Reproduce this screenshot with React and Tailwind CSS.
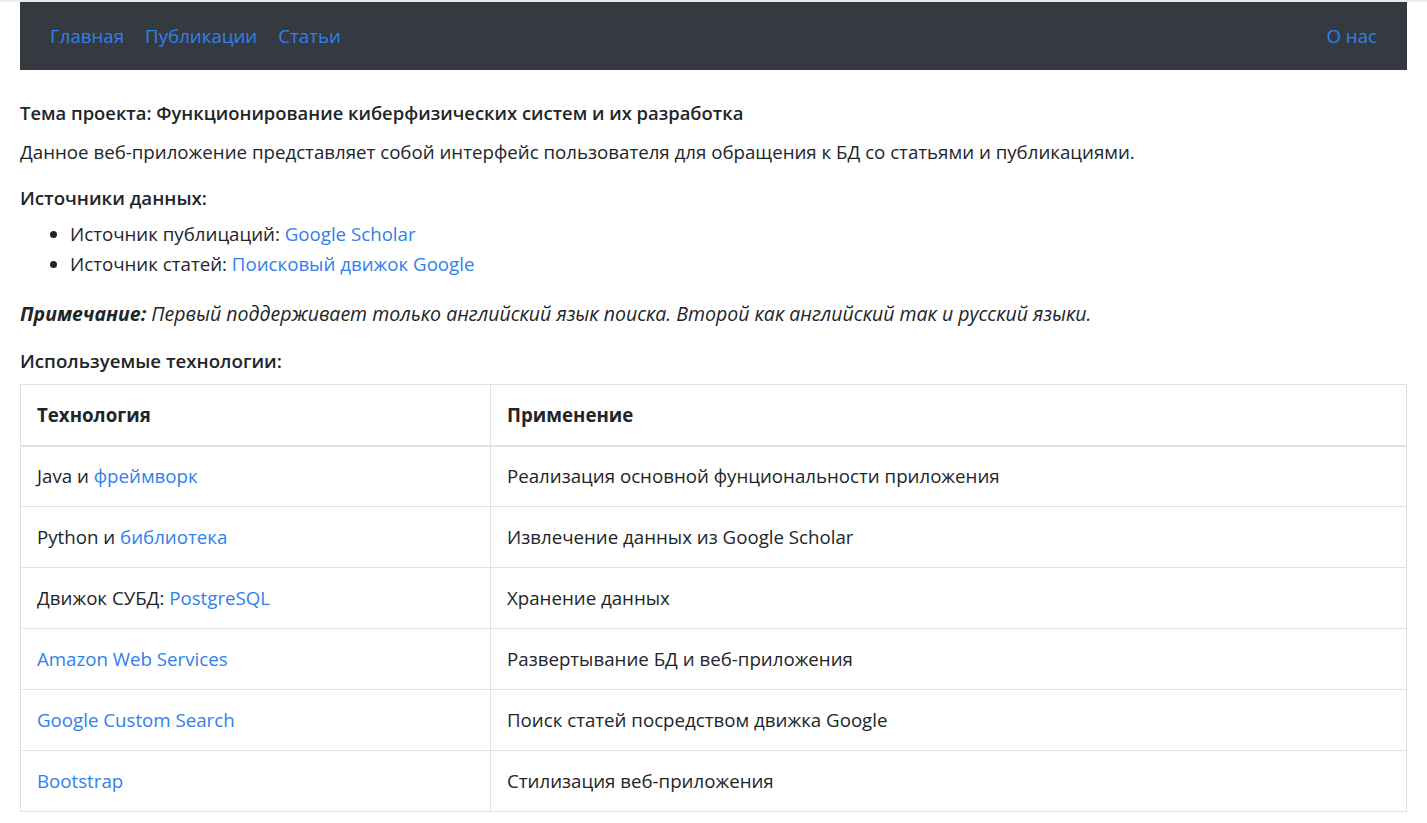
import React from 'react';

const rows = [
  { tech: <>Java и <A>фреймворк</A></>, use: 'Реализация основной фунциональности приложения' },
  { tech: <>Python и <A>библиотека</A></>, use: 'Извлечение данных из Google Scholar' },
  { tech: <>Движок СУБД: <A>PostgreSQL</A></>, use: 'Хранение данных' },
  { tech: <A>Amazon Web Services</A>, use: 'Развертывание БД и веб-приложения' },
  { tech: <A>Google Custom Search</A>, use: 'Поиск статей посредством движка Google' },
  { tech: <A>Bootstrap</A>, use: 'Стилизация веб-приложения' },
];

function A({ children }) {
  return (
    <a href="#" className="text-[#2f80ed]">
      {children}
    </a>
  );
}

export default function App() {
  return (
    <div
      className="min-h-[823px] bg-white text-[#212529] text-[18.7px] leading-[30px] border-t-2 border-[#e9ecef]"
      style={{ fontFamily: '"Open Sans", "Noto Sans", sans-serif' }}
    >
      <div className="px-5">
        {/* Navbar */}
        <nav className="h-[68px] bg-[#343a40] flex items-center justify-between px-[30px]">
          <div className="flex gap-[21px]">
            <a href="#" className="text-[#2f80ed]">Главная</a>
            <a href="#" className="text-[#2f80ed]">Публикации</a>
            <a href="#" className="text-[#2f80ed]">Статьи</a>
          </div>
          <a href="#" className="text-[#2f80ed]">О нас</a>
        </nav>

        <div className="pt-[29px]">
          <p className="font-semibold text-[18.4px] leading-[28px]">
            Тема проекта: Функционирование киберфизических систем и их разработка
          </p>
          <p className="mt-[10px]">
            Данное веб-приложение представляет собой интерфейс пользователя для обращения к БД со статьями и публикациями.
          </p>

          <p className="mt-[16px] font-semibold">Источники данных:</p>
          <ul className="mt-[6px] pl-[50px] list-disc">
            <li>Источник публицаций: <A>Google Scholar</A></li>
            <li>Источник статей: <A>Поисковый движок Google</A></li>
          </ul>

          <p className="mt-[20px] italic text-[19.5px]">
            <b className="font-bold">Примечание:</b> Первый поддерживает только английский язык поиска. Второй как английский так и русский языки.
          </p>

          <p className="mt-[17px] font-semibold">Используемые технологии:</p>

          <table className="mt-[8px] w-full border-collapse border border-[#dee2e6]">
            <thead>
              <tr className="border-b-2 border-[#dee2e6]">
                <th className="w-[470px] h-[61px] text-left font-bold px-4 border-r border-[#dee2e6]">Технология</th>
                <th className="text-left font-bold px-4">Применение</th>
              </tr>
            </thead>
            <tbody>
              {rows.map((r, i) => (
                <tr key={i} className="border-b border-[#dee2e6]">
                  <td className="h-[61px] px-4 border-r border-[#dee2e6]">{r.tech}</td>
                  <td className="px-4">{r.use}</td>
                </tr>
              ))}
            </tbody>
          </table>
        </div>
      </div>
    </div>
  );
}
